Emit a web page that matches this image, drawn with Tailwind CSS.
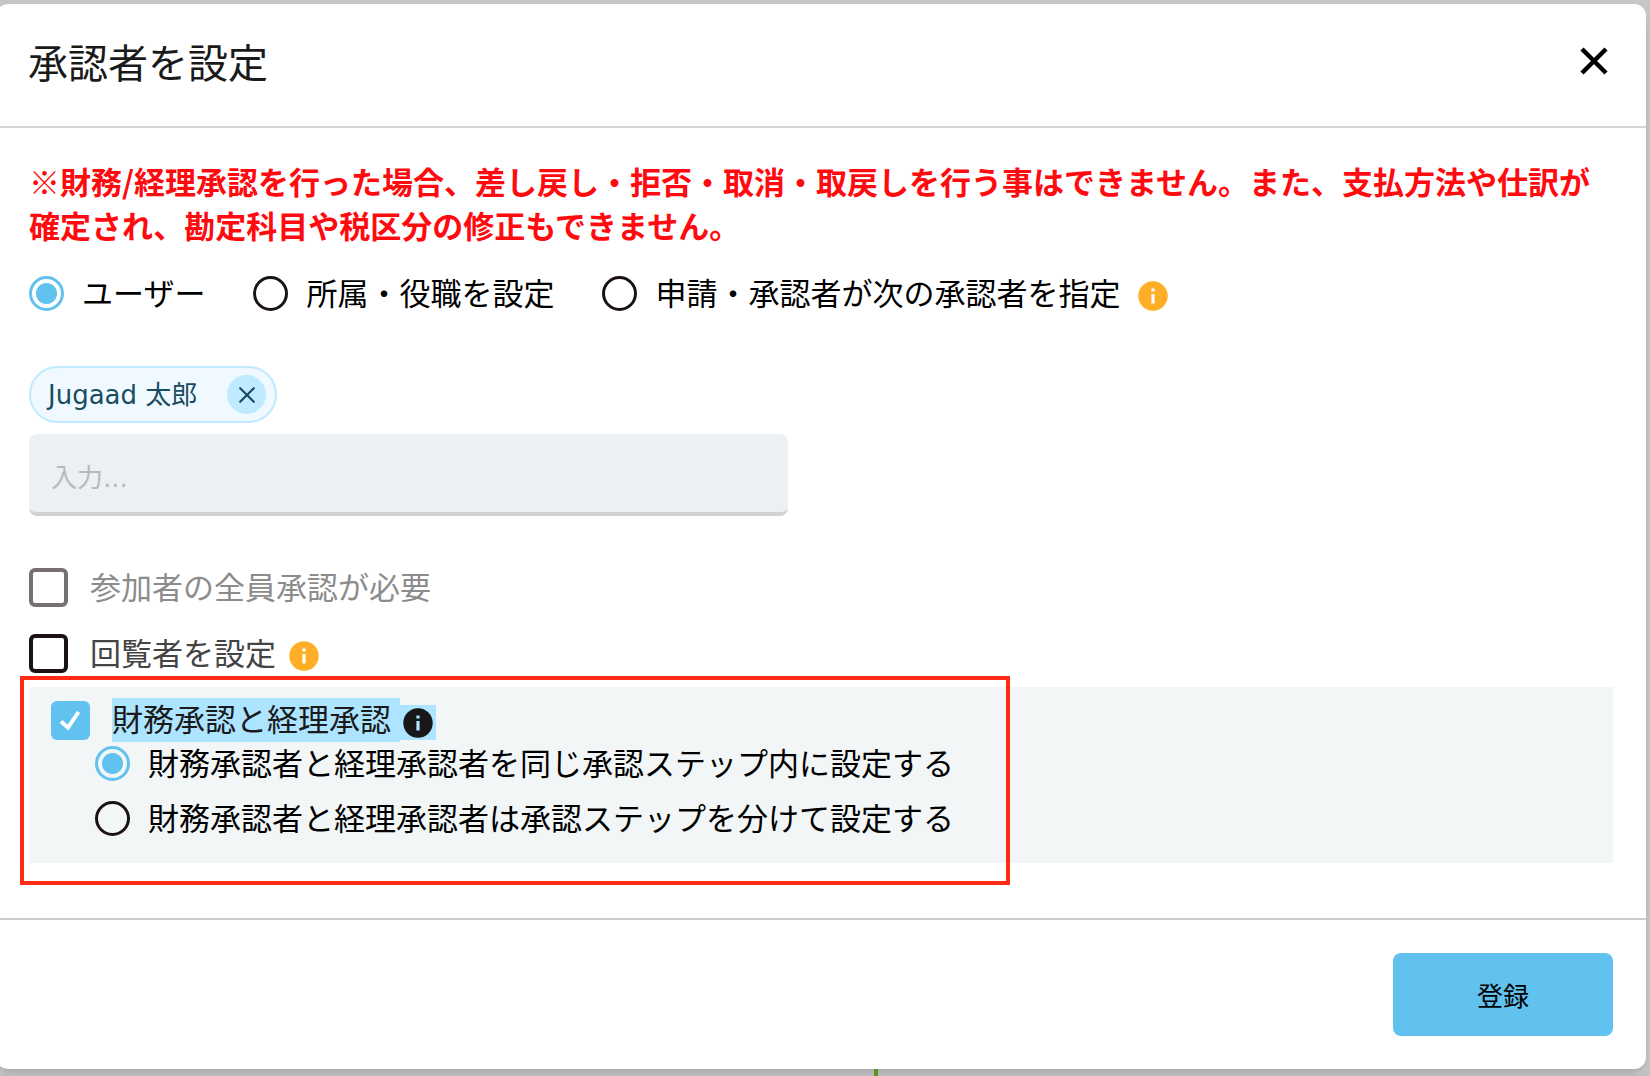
<!DOCTYPE html>
<html lang="ja">
<head>
    <meta charset="UTF-8">
    <meta name="viewport" content="width=device-width, initial-scale=1.0">
    <title>承認者を設定</title>
    <script src="https://cdn.jsdelivr.net/npm/@tailwindcss/browser@4"></script>
</head>
<body class="min-h-screen flex flex-col bg-[#c6c6c6] overflow-x-hidden font-['Noto_Sans_CJK_JP',sans-serif] text-[31px] leading-[31px] text-black">
    <main class="mt-1 mr-1 -ml-1 bg-white rounded-xl shadow-lg">
        <header class="flex items-center justify-between h-[124px] px-8 pb-2 border-b-2 border-[#d6d6d6]">
            <h1 class="text-[40px] leading-[48px] text-[#1a1a1a]">承認者を設定</h1>
            <button type="button" aria-label="閉じる" class="p-1">
                <svg class="size-8" viewBox="0 0 32 32" fill="none" stroke="#000" stroke-width="4.5">
                    <path d="M4 4L28 28M28 4L4 28"/>
                </svg>
            </button>
        </header>

        <form class="px-[33px] pt-[31px] pb-[55px]">
            <p class="font-bold leading-[44px] text-[#ff0a0f]">※財務/経理承認を行った場合、差し戻し・拒否・取消・取戻しを行う事はできません。また、支払方法や仕訳が確定され、勘定科目や税区分の修正もできません。</p>

            <!-- Approver type -->
            <div class="flex items-center gap-12 mt-[29px]">
                <div class="flex items-center gap-[18px]">
                    <input type="radio" name="type" id="type-user" checked class="appearance-none size-[35px] shrink-0 rounded-full border-3 border-[#1a1311] checked:border-[#61c2f0] checked:bg-[radial-gradient(circle,#61c2f0_10px,transparent_11px)]">
                    <label for="type-user" class="pb-1">ユーザー</label>
                </div>
                <div class="flex items-center gap-[18px]">
                    <input type="radio" name="type" id="type-post" class="appearance-none size-[35px] shrink-0 rounded-full border-3 border-[#1a1311] checked:border-[#61c2f0] checked:bg-[radial-gradient(circle,#61c2f0_10px,transparent_11px)]">
                    <label for="type-post" class="pb-1">所属・役職を設定</label>
                </div>
                <div class="flex items-center gap-[18px]">
                    <input type="radio" name="type" id="type-next" class="appearance-none size-[35px] shrink-0 rounded-full border-3 border-[#1a1311] checked:border-[#61c2f0] checked:bg-[radial-gradient(circle,#61c2f0_10px,transparent_11px)]">
                    <label for="type-next" class="pb-1">申請・承認者が次の承認者を指定</label>
                    <svg class="size-[30px] mt-1" viewBox="0 0 30 30">
                        <circle cx="15" cy="15" r="14.7" fill="#ffae27"/>
                        <path d="M13.4 7.5h3.2v3h-3.2zM13.4 13h3.2v9.5h-3.2z" fill="#fff"/>
                    </svg>
                </div>
            </div>

            <!-- Selected user -->
            <div class="flex mt-[55px]">
                <div class="flex items-center h-[57px] pl-[17px] pr-[9px] gap-[30px] rounded-full border-2 border-[#bfeaff] bg-[#f0f9ff] text-[#174c61] text-[26px] font-['DejaVu_Sans','Noto_Sans_CJK_JP',sans-serif]">
                    <span class="pt-[2px]">Jugaad 太郎</span>
                    <button type="button" aria-label="削除" class="flex items-center justify-center size-[39px] rounded-full bg-[#bfeaff]">
                        <svg class="size-4" viewBox="0 0 16 16" fill="none" stroke="#174c61" stroke-width="2.2" stroke-linecap="round">
                            <path d="M1.2 1.2L14.8 14.8M14.8 1.2L1.2 14.8"/>
                        </svg>
                    </button>
                </div>
            </div>
            <input type="text" aria-label="入力" placeholder="入力..." class="block w-[759px] h-[82px] mt-[11px] px-[22px] pt-[10px] rounded-lg border-b-4 border-[#d0d2d3] bg-[#ecf0f3] text-[26px] font-['DejaVu_Sans','Noto_Sans_CJK_JP',sans-serif] placeholder:text-[#b9b9b9]">

            <!-- Options -->
            <div class="flex items-center gap-[22px] mt-[52px]">
                <input type="checkbox" id="all" class="appearance-none size-[39px] shrink-0 rounded-md border-4 border-[#767070]">
                <label for="all" class="pb-1 text-[#8c8c8c]">参加者の全員承認が必要</label>
            </div>
            <div class="flex items-center mt-[27px]">
                <input type="checkbox" id="viewer" class="appearance-none size-[39px] shrink-0 rounded-md border-4 border-[#1a1311]">
                <label for="viewer" class="ml-[22px] pb-1 text-[#444]">回覧者を設定</label>
                <svg class="size-[30px] ml-[13px] mt-1" viewBox="0 0 30 30">
                    <circle cx="15" cy="15" r="14.7" fill="#ffae27"/>
                    <path d="M13.4 7.5h3.2v3h-3.2zM13.4 13h3.2v9.5h-3.2z" fill="#fff"/>
                </svg>
            </div>

            <section class="relative mt-[14px] pt-[11px] pb-[27px] px-[22px] bg-[#f2f6f7]">
                <div class="flex items-center h-11">
                    <span class="grid shrink-0">
                        <input type="checkbox" id="finance" checked class="appearance-none col-start-1 row-start-1 size-[39px] rounded-md bg-[#61c2f0]">
                        <svg class="col-start-1 row-start-1 size-[39px] pointer-events-none" viewBox="0 0 39 39" fill="none" stroke="#fff" stroke-width="4">
                            <path d="M10 20.5L17 26.5L27.5 11"/>
                        </svg>
                    </span>
                    <label for="finance" class="ml-[22px] pr-[9px] pb-1 leading-[40px] bg-[#ade4ff] text-[#1a1a1a]">財務承認と経理承認</label>
                    <span class="flex items-center px-[3px] h-[35px] mt-[5px] bg-[#ade4ff]">
                        <svg class="size-[30px]" viewBox="0 0 30 30">
                            <circle cx="15" cy="15" r="14.7" fill="#171717"/>
                            <path d="M13.4 7.5h3.2v3h-3.2zM13.4 13h3.2v9.5h-3.2z" fill="#ade4ff"/>
                        </svg>
                    </span>
                </div>
                <div class="flex flex-col gap-5 mt-1 pl-11">
                    <div class="flex items-center gap-[18px]">
                        <input type="radio" name="step" id="step-same" checked class="appearance-none size-[35px] shrink-0 rounded-full border-3 border-[#1a1311] checked:border-[#61c2f0] checked:bg-[radial-gradient(circle,#61c2f0_10px,transparent_11px)]">
                        <label for="step-same" class="pb-1">財務承認者と経理承認者を同じ承認ステップ内に設定する</label>
                    </div>
                    <div class="flex items-center gap-[18px]">
                        <input type="radio" name="step" id="step-split" class="appearance-none size-[35px] shrink-0 rounded-full border-3 border-[#1a1311] checked:border-[#61c2f0] checked:bg-[radial-gradient(circle,#61c2f0_10px,transparent_11px)]">
                        <label for="step-split" class="pb-1">財務承認者と経理承認者は承認ステップを分けて設定する</label>
                    </div>
                </div>
                <!-- Highlight frame -->
                <div class="absolute -top-[11px] -bottom-[22px] -left-[9px] w-[990px] border-4 border-[#ff2a14] pointer-events-none"></div>
            </section>
        </form>

        <footer class="flex justify-end p-[33px] border-t-2 border-[#cbcbcb]">
            <button type="submit" class="w-[220px] h-[83px] rounded-lg bg-[#61c2f0] text-[26px]">登録</button>
        </footer>
    </main>
    <div class="grow flex justify-center pl-[102px]">
        <div class="w-1 bg-[#5b9425]"></div>
    </div>
</body>
</html>
